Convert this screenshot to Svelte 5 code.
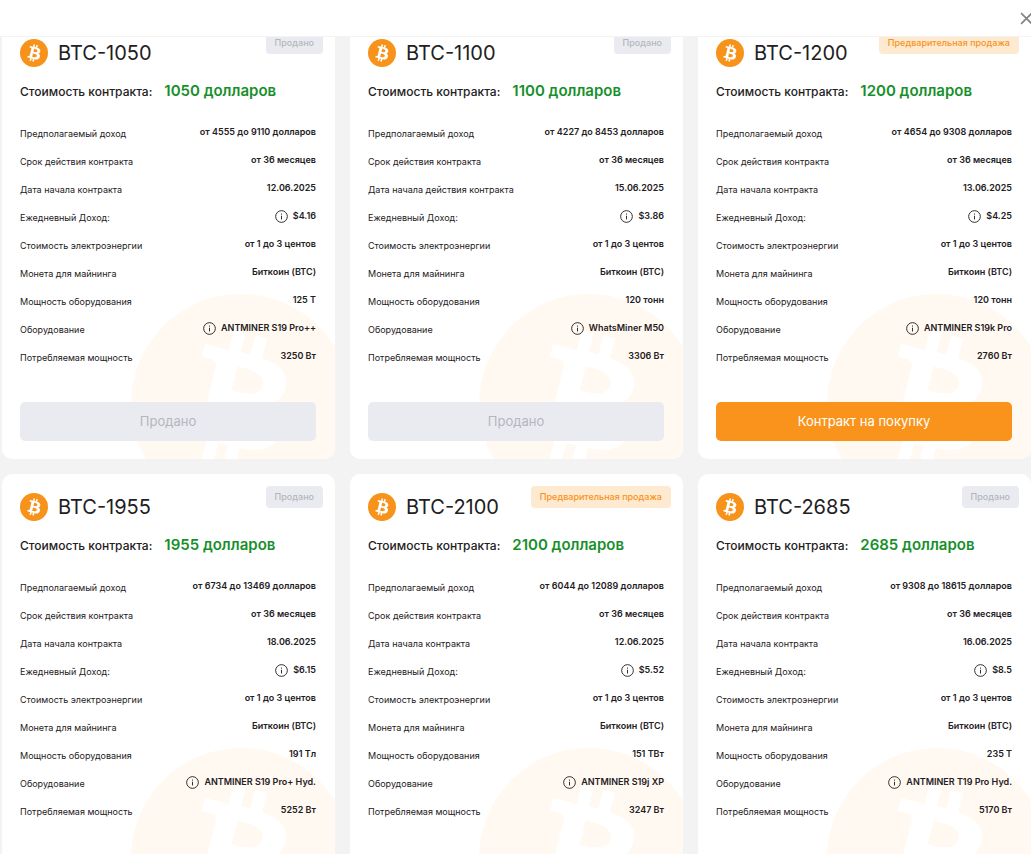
<script>
  const contracts = [
    { name: 'BTC-1050', presale: false, price: '1050', income: 'от 4555 до 9110 долларов', startLabel: 'Дата начала контракта', start: '12.06.2025', daily: '$4.16', power: '125 Т', device: 'ANTMINER S19 Pro++', watts: '3250 Вт' },
    { name: 'BTC-1100', presale: false, price: '1100', income: 'от 4227 до 8453 долларов', startLabel: 'Дата начала действия контракта', start: '15.06.2025', daily: '$3.86', power: '120 тонн', device: 'WhatsMiner M50', watts: '3306 Вт' },
    { name: 'BTC-1200', presale: true, price: '1200', income: 'от 4654 до 9308 долларов', startLabel: 'Дата начала контракта', start: '13.06.2025', daily: '$4.25', power: '120 тонн', device: 'ANTMINER S19k Pro', watts: '2760 Вт' },
    { name: 'BTC-1955', presale: false, price: '1955', income: 'от 6734 до 13469 долларов', startLabel: 'Дата начала контракта', start: '18.06.2025', daily: '$6.15', power: '191 Тл', device: 'ANTMINER S19 Pro+ Hyd.', watts: '5252 Вт' },
    { name: 'BTC-2100', presale: true, price: '2100', income: 'от 6044 до 12089 долларов', startLabel: 'Дата начала контракта', start: '12.06.2025', daily: '$5.52', power: '151 ТВт', device: 'ANTMINER S19j XP', watts: '3247 Вт' },
    { name: 'BTC-2685', presale: false, price: '2685', income: 'от 9308 до 18615 долларов', startLabel: 'Дата начала контракта', start: '16.06.2025', daily: '$8.5', power: '235 Т', device: 'ANTMINER T19 Pro Hyd.', watts: '5170 Вт' }
  ];

  const rowsOf = (c) => [
    { label: 'Предполагаемый доход', value: c.income },
    { label: 'Срок действия контракта', value: 'от 36 месяцев' },
    { label: c.startLabel, value: c.start },
    { label: 'Ежедневный Доход:', value: c.daily, info: true },
    { label: 'Стоимость электроэнергии', value: 'от 1 до 3 центов' },
    { label: 'Монета для майнинга', value: 'Биткоин (BTC)' },
    { label: 'Мощность оборудования', value: c.power },
    { label: 'Оборудование', value: c.device, info: true },
    { label: 'Потребляемая мощность', value: c.watts }
  ];
</script>

{#snippet coin(cls, shift)}
  <svg class={cls} viewBox="0 0 32 32" aria-hidden="true">
    <circle cx="16" cy="16" r="16" fill="currentColor" />
    <path transform={shift} fill="#fff" d="M23.189 14.02c.314-2.096-1.283-3.223-3.465-3.975l.708-2.84-1.728-.43-.69 2.765c-.454-.114-.92-.22-1.385-.326l.695-2.783L15.596 6l-.708 2.839c-.376-.086-.746-.17-1.104-.26l.002-.009-2.384-.595-.46 1.846s1.283.294 1.256.312c.7.175.826.638.805 1.006l-.806 3.235c.048.012.11.03.18.057l-.183-.045-1.13 4.532c-.086.212-.303.531-.793.41.018.025-1.256-.313-1.256-.313l-.858 1.978 2.25.561c.418.105.828.215 1.231.318l-.715 2.872 1.727.43.708-2.84c.472.127.93.245 1.378.357l-.706 2.828 1.728.43.715-2.866c2.948.558 5.164.333 6.097-2.333.752-2.146-.037-3.385-1.588-4.192 1.13-.26 1.98-1.003 2.207-2.538zm-3.95 5.538c-.533 2.147-4.148.986-5.32.695l.95-3.805c1.172.293 4.929.872 4.37 3.11zm.535-5.569c-.487 1.953-3.495.96-4.47.717l.86-3.45c.975.243 4.118.696 3.61 2.733z" />
  </svg>
{/snippet}

<div class="page">
  <header>
    <button class="close" aria-label="Закрыть">
      <svg viewBox="0 0 12 12" aria-hidden="true"><path d="M1 1l10 10M11 1L1 11" /></svg>
    </button>
  </header>

  <main>
    {#each contracts as c (c.name)}
      <article>
        {@render coin('watermark', 'translate(-0.65 -0.7)')}
        <span class="badge" class:presale={c.presale}>{c.presale ? 'Предварительная продажа' : 'Продано'}</span>
        <h2>{@render coin('logo')}{c.name}</h2>
        <p class="price">Стоимость контракта: <strong>{c.price} долларов</strong></p>
        <dl>
          {#each rowsOf(c) as row}
            <div class="row">
              <dt>{row.label}</dt>
              <dd>
                {#if row.info}
                  <svg class="info" viewBox="0 0 14 14" aria-hidden="true">
                    <circle cx="7" cy="7" r="6.3" />
                    <path d="M7 6.2v4M7 3.8v1.2" />
                  </svg>
                {/if}
                {row.value}
              </dd>
            </div>
          {/each}
        </dl>
        <button class="buy" disabled={!c.presale}>{c.presale ? 'Контракт на покупку' : 'Продано'}</button>
      </article>
    {/each}
  </main>
</div>

<style>
  :global(body) {
    margin: 0;
  }
  .page {
    height: 100vh;
    overflow: hidden;
    background: #f3f3f3;
    color: #1e2022;
    font-family: Inter, 'Liberation Sans', sans-serif;
  }
  header {
    position: relative;
    z-index: 2;
    box-sizing: border-box;
    height: 37px;
    display: flex;
    align-items: center;
    justify-content: flex-end;
    background: #fff;
    border-bottom: 1px solid #f3f3f3;
    overflow: hidden;
  }
  .close {
    display: flex;
    flex: none;
    margin-right: -2px;
    padding: 0;
    border: 0;
    background: none;
    cursor: pointer;
  }
  .close svg {
    width: 13px;
    height: 13px;
    fill: none;
    stroke: #808285;
    stroke-width: 1.5;
  }
  /* The list is scrolled slightly beneath the header. */
  main {
    display: grid;
    grid-template-columns: repeat(3, minmax(0, 1fr));
    gap: 15px;
    margin-top: -17px;
    padding-left: 2px;
  }
  article {
    position: relative;
    overflow: hidden;
    padding: 19px 19px 18px 18px;
    border-radius: 10px;
    background: #fff;
  }
  .watermark {
    position: absolute;
    right: -16px;
    bottom: -55px;
    width: 220px;
    height: 220px;
    color: #fff9f2;
  }
  .badge {
    position: absolute;
    top: 12px;
    right: 12px;
    padding: 0 9px;
    border-radius: 4px;
    background: #eaebf1;
    color: #b4b6bc;
    font-size: 9px;
    font-weight: 500;
    line-height: 22px;
  }
  .badge.presale {
    background: #fee9d1;
    color: #f7931a;
  }
  h2 {
    display: flex;
    align-items: center;
    gap: 10px;
    margin: 0;
    font-size: 20px;
    font-weight: 400;
    line-height: 28px;
  }
  .logo {
    width: 28px;
    height: 28px;
    color: #f7931a;
  }
  .price {
    position: relative;
    display: flex;
    align-items: baseline;
    gap: 12px;
    margin: 14px 0 18px;
    font-size: 12px;
    font-weight: 500;
    line-height: 20px;
  }
  strong {
    color: #17902b;
    font-size: 15px;
    font-weight: 600;
  }
  dl {
    position: relative;
    margin: 0 0 30px;
  }
  .row {
    display: flex;
    justify-content: space-between;
    height: 28px;
    font-size: 9px;
    white-space: nowrap;
  }
  dt {
    line-height: 28px;
  }
  dd {
    display: flex;
    align-items: center;
    gap: 5px;
    margin: 0;
    height: 24px;
    font-weight: 600;
    line-height: 24px;
  }
  .info {
    width: 13px;
    height: 13px;
    fill: none;
    stroke: #1e2022;
    stroke-width: 1;
  }
  .buy {
    position: relative;
    display: block;
    width: 100%;
    height: 39px;
    padding: 0;
    border: 0;
    border-radius: 5px;
    background: #f9931b;
    color: #fff;
    font: 400 13px/39px Inter, 'Liberation Sans', sans-serif;
    cursor: pointer;
  }
  .buy:disabled {
    background: #eaebf1;
    color: #b4b6bc;
    cursor: default;
  }
</style>
